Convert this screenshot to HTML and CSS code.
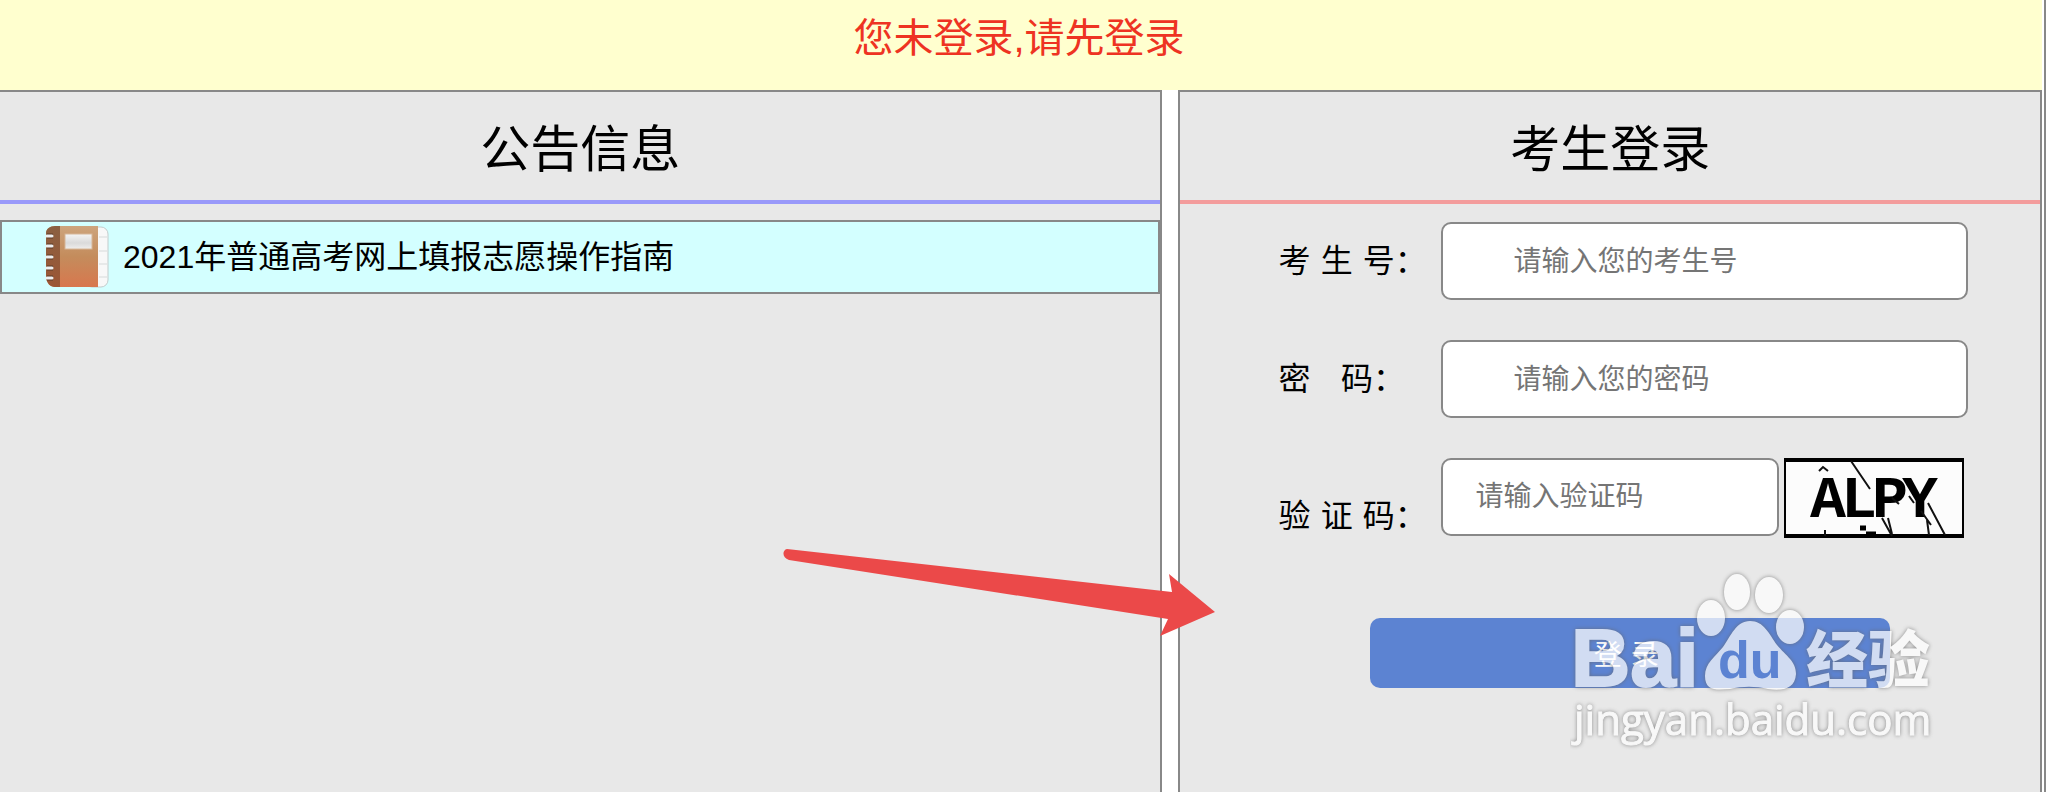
FILE: index.html
```html
<!DOCTYPE html>
<html lang="zh-CN">
<head>
    <meta charset="UTF-8">
    <meta name="viewport" content="width=device-width, initial-scale=1.0">
    <title>考生登录</title>
    <link rel="stylesheet" href="styles.css">
</head>
<body>
    <div class="page">
        <div class="tip">您未登录,请先登录</div>

        <div class="main">
            <section class="panel notice">
                <h2>公告信息</h2>
                <a class="notice-item" href="#">
                    <svg class="book" viewBox="0 0 64 64" aria-hidden="true">
                        <defs>
                            <linearGradient id="cover" x1="0" y1="0" x2="0" y2="1">
                                <stop offset="0" stop-color="#cda47c"/>
                                <stop offset="0.5" stop-color="#c48c5c"/>
                                <stop offset="1" stop-color="#d8774e"/>
                            </linearGradient>
                            <linearGradient id="spine" x1="0" y1="0" x2="0" y2="1">
                                <stop offset="0" stop-color="#8a6041"/>
                                <stop offset="1" stop-color="#9c5634"/>
                            </linearGradient>
                            <linearGradient id="plate" x1="0" y1="0" x2="0" y2="1">
                                <stop offset="0" stop-color="#f4f4f4"/>
                                <stop offset="0.6" stop-color="#dadada"/>
                                <stop offset="1" stop-color="#f0eeec"/>
                            </linearGradient>
                        </defs>
                        <rect x="40" y="2" width="23" height="60" rx="7" fill="#f8f8f8" stroke="#c3cccc"/>
                        <path d="M54 12h8M54 26h8M54 39h8M54 52h8" stroke="#d6dada"/>
                        <path d="M10 1h43v61H10c-5 0-8-4-9-9V8c0-4 4-7 9-7z" fill="url(#cover)"/>
                        <path d="M10 1h5v61h-5c-5 0-8-4-9-9V8c0-4 4-7 9-7z" fill="url(#spine)"/>
                        <rect x="20" y="9" width="27" height="15" fill="url(#plate)" stroke="#d6b697"/>
                        <path d="M2 11h6M2 21h6M2 32h6M2 43h6M2 53h6" stroke="#5c3c28" stroke-width="5"/>
                        <path d="M2 11h5M2 21h5M2 32h5M2 43h5M2 53h5" stroke="#efefef" stroke-width="3" stroke-linecap="round"/>
                    </svg>
                    <span>2021年普通高考网上填报志愿操作指南</span>
                </a>
            </section>

            <section class="panel login">
                <h2>考生登录</h2>
                <form class="login-form">
                    <div class="field">
                        <label for="ksh">考 生 号：</label>
                        <input type="text" id="ksh" placeholder="请输入您的考生号">
                    </div>
                    <div class="field">
                        <label for="mm">密&nbsp;&nbsp;&nbsp;码：</label>
                        <input type="password" id="mm" placeholder="请输入您的密码">
                    </div>
                    <div class="field code">
                        <label for="yzm">验 证 码：</label>
                        <input type="text" id="yzm" placeholder="请输入验证码">
                        <svg class="captcha" viewBox="0 0 180 80" role="img" aria-label="验证码">
                            <rect x="1" y="1" width="178" height="78" fill="#fcfcfc" stroke="#000" stroke-width="2"/>
                            <path d="M0 2h180M0 78h180" stroke="#000" stroke-width="4"/>
                            <text x="26 57 88 118" y="59">ALPY</text>
                            <path d="M67 3l19 28M35 13l4-4 5 4M108 40l7 6M98 60l10 18M104 60l4 16M125 38l5 7M137 53l10 14M143 62l2 15M144 45l17 32M41 72v6" fill="none" stroke="#111" stroke-width="2"/>
                            <path d="M76 70h6M82 76h10" stroke="#000" stroke-width="5"/>
                        </svg>
                    </div>
                    <button type="button">登 录</button>
                </form>
            </section>
        </div>

        <svg class="arrow" viewBox="0 0 434 90" aria-hidden="true">
            <path d="M4 1L389 44L386 26L432 64L377 88L385 71L6 12C-1 10 -1 2 4 1z" fill="#eb4949"/>
        </svg>

        <svg class="watermark" viewBox="0 0 380 200" role="img" aria-label="Baidu经验">
            <g class="mark">
                <ellipse cx="141" cy="68" rx="14" ry="18"/>
                <ellipse cx="167" cy="42" rx="13" ry="18"/>
                <ellipse cx="199" cy="45" rx="14" ry="18"/>
                <ellipse cx="220" cy="77" rx="14" ry="17"/>
                <path d="M180 71c-14 0-19 15-27 26c-8 10-18 16-18 29c0 15 11 14 25 13c12-3 26-3 38 0c15 2 27 0 28-15c0-13-10-18-19-29c-8-11-13-24-27-24z"/>
                <text class="brand" x="1" y="136">Bai</text>
                <text class="brand-cn" x="236" y="133">经验</text>
                <text class="site" x="4" y="185">jingyan.baidu.com</text>
            </g>
            <text class="du" x="148" y="128">du</text>
        </svg>
    </div>
</body>
</html>
```
FILE: styles.css
```css
* {
    margin: 0;
    padding: 0;
    box-sizing: border-box;
}

body {
    font-family: "Liberation Sans", "Noto Sans CJK SC", sans-serif;
    background: #fff;
    color: #000;
    padding-right: 2px;
}

.page {
    position: relative;
    display: flex;
    flex-direction: column;
    min-height: 100vh;
    padding-right: 2px;
    border-right: 2px solid #888;
    overflow: hidden;
}

.tip {
    height: 90px;
    padding: 8px 4px 0 0;
    background: #ffffcf;
    color: #ee3322;
    font-size: 40px;
    line-height: 60px;
    text-align: center;
}

.main {
    flex: 1;
    display: grid;
    grid-template-columns: minmax(0, 35fr) minmax(0, 26fr);
    gap: 16px;
}

.panel {
    background: #e8e8e8;
    border: 2px solid #888;
    border-bottom: none;
}

.notice {
    border-left: none;
}

.panel h2 {
    height: 112px;
    border-bottom: 4px solid #9999f9;
    font-size: 50px;
    font-weight: normal;
    line-height: 116px;
    text-align: center;
}

.login h2 {
    border-bottom-color: #f39c9c;
}

.notice-item {
    display: flex;
    align-items: center;
    gap: 14px;
    height: 74px;
    margin-top: 16px;
    padding-left: 43px;
    background: #d3ffff;
    border: 2px solid #888;
    color: #000;
    font-size: 32px;
    text-decoration: none;
}

.notice-item span {
    padding-bottom: 6px;
}

.book {
    width: 64px;
    height: 64px;
}

.login-form {
    display: flex;
    flex-direction: column;
    gap: 40px;
    padding: 18px 72px 0 98px;
}

.field {
    display: flex;
    align-items: center;
}

.field label {
    flex: none;
    width: 163px;
    font-family: "DejaVu Sans", "Noto Sans CJK SC", sans-serif;
    font-size: 32px;
    line-height: 44px;
    white-space: nowrap;
}

.field input {
    flex: 1;
    min-width: 0;
    height: 78px;
    padding: 2px 70px 0;
    background: #fff;
    border: 2px solid #888;
    border-radius: 10px;
    font-family: inherit;
    font-size: 28px;
}

.field input::placeholder {
    color: #757575;
}

.code label {
    align-self: flex-end;
}

.code input {
    align-self: flex-start;
    padding: 0 32px;
}

.captcha {
    flex: none;
    width: 180px;
    height: 80px;
    margin: 0 4px 0 5px;
}

.captcha text {
    font-family: "Liberation Mono", monospace;
    font-size: 60px;
    font-weight: bold;
}

.login-form button {
    height: 70px;
    margin: 40px 78px 0 92px;
    padding-right: 8px;
    background: #5c83d2;
    border: none;
    border-radius: 10px;
    color: #fff;
    font-family: "DejaVu Sans", "Noto Sans CJK SC", sans-serif;
    font-size: 28px;
    cursor: pointer;
}

/* overlays */
.arrow {
    position: absolute;
    top: 548px;
    left: 783px;
    width: 434px;
    height: 90px;
    pointer-events: none;
}

.watermark {
    position: absolute;
    top: 550px;
    right: 94px;
    width: 380px;
    height: 200px;
    pointer-events: none;
}

.mark {
    fill: #fff;
    opacity: 0.72;
    filter: drop-shadow(0 0 2px #666);
}

.brand {
    font: bold 82px "Liberation Sans", sans-serif;
    stroke: #fff;
    stroke-width: 2px;
}

.brand-cn {
    font: 900 62px "Noto Sans CJK SC", sans-serif;
}

.site {
    font: 42px "Open Sans", sans-serif;
    stroke: #fff;
    stroke-width: 1px;
}

.du {
    fill: #5c83d2;
    font: bold 52px "Liberation Sans", sans-serif;
}
```
